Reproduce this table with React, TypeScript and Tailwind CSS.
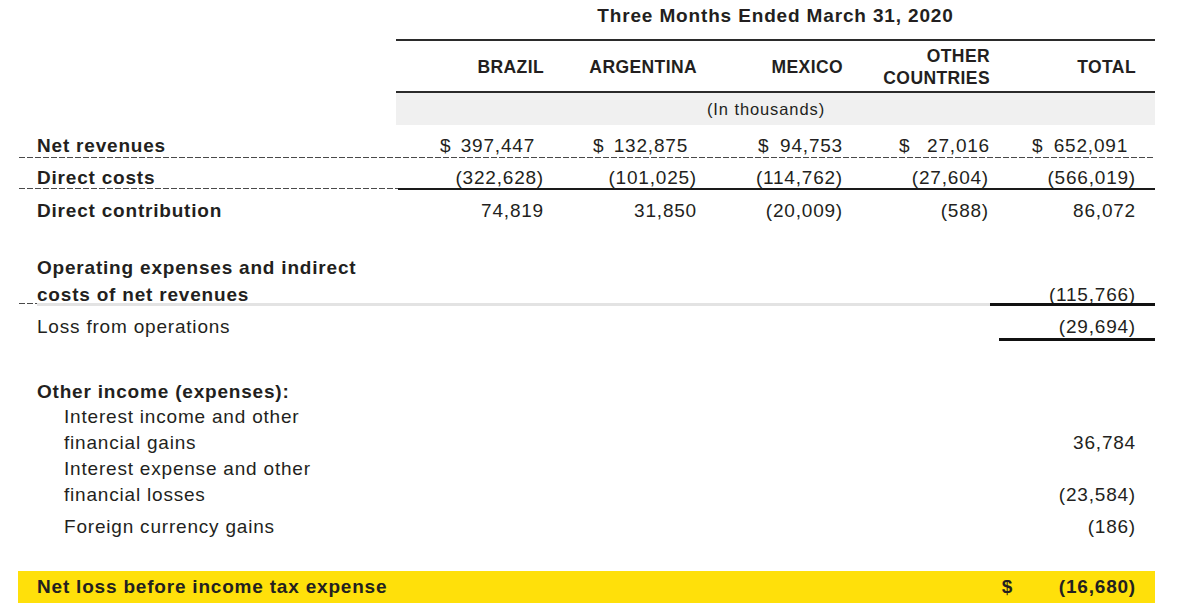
import React from 'react';

// ─── Data ─────────────────────────────────────────────────────────────────────

const GRID = 'grid grid-cols-[377px_156px_153px_146px_147px_157px]';

const revenues = [
  { amount: '397,447', cls: 'pl-[44px] pr-[17px]' },
  { amount: '132,875', cls: 'pl-[41px] pr-[17px]' },
  { amount: '94,753', cls: 'pl-[53px] pr-[8px]' },
  { amount: '27,016', cls: 'pl-[48px] pr-[8px]' },
  { amount: '652,091', cls: 'pl-[34px] pr-[27px]' },
];

const numPad = ['pr-[8px]', 'pr-[8px]', 'pr-[8px]', 'pr-[9px]', 'pr-[19px]'];

const directCosts = ['(322,628)', '(101,025)', '(114,762)', '(27,604)', '(566,019)'];
const contribution = ['74,819', '31,850', '(20,009)', '(588)', '86,072'];

// ─── Bits ─────────────────────────────────────────────────────────────────────

function Dashed({ className = '' }: { className?: string }) {
  return (
    <div
      className={`h-[1px] bg-[linear-gradient(to_right,#4a4a4a_75%,transparent_0)] bg-[length:8px_1px] bg-repeat-x ${className}`}
    />
  );
}

function Cells({ values }: { values: string[] }) {
  return (
    <>
      {values.map((v, i) => (
        <div key={i} className={`text-right ${numPad[i]}`}>{v}</div>
      ))}
    </>
  );
}

// ─── Page ─────────────────────────────────────────────────────────────────────

export default function App() {
  return (
    <div className="min-h-screen bg-white font-['Liberation_Sans',Arial,sans-serif] text-[#231f20] text-[19px] leading-[20px] tracking-[0.8px]">
      <div className="pl-[19px] w-[1155px]">
        {/* title */}
        <div className={GRID}>
          <div className="col-start-2 col-span-5 pt-[6px] pb-[13px] text-center font-bold text-[19px] tracking-[0.85px]">
            Three Months Ended March 31, 2020
          </div>
        </div>
        <div className="ml-[377px] h-[2px] bg-[#2b2b2b]" />

        {/* column headers */}
        <div className={`${GRID} h-[50px] pt-[2px] items-center font-bold text-[17.5px] tracking-[0.4px] uppercase`}>
          <div />
          <div className="text-right pr-[8px]">Brazil</div>
          <div className="text-right pr-[8px]">Argentina</div>
          <div className="text-right pr-[8px]">Mexico</div>
          <div className="text-right pr-[8px] leading-[22px]">
            Other<br />Countries
          </div>
          <div className="text-right pr-[19px]">Total</div>
        </div>
        <div className="ml-[377px] h-[2px] bg-[#2b2b2b]" />
        <div className="ml-[377px] h-[32px] bg-[#f0f0f0] pr-[19px] flex items-center justify-center text-[16.5px] tracking-[0.9px]">
          (In thousands)
        </div>

        {/* segment rows */}
        <div className={`${GRID} h-[32px] items-end pb-[1px]`}>
          <div className="pl-[18px] font-bold">Net revenues</div>
          {revenues.map((r, i) => (
            <div key={i} className={`flex justify-between ${r.cls}`}>
              <span>$</span>
              <span>{r.amount}</span>
            </div>
          ))}
        </div>
        <Dashed />

        <div className={`${GRID} h-[30px] items-end`}>
          <div className="pl-[18px] font-bold">Direct costs</div>
          <Cells values={directCosts} />
        </div>
        <div className="flex h-[2px]">
          <Dashed className="w-[379px]" />
          <div className="flex-1 bg-[#1a1a1a]" />
        </div>

        <div className={`${GRID} h-[31px] items-end`}>
          <div className="pl-[18px] font-bold">Direct contribution</div>
          <Cells values={contribution} />
        </div>

        {/* operating */}
        <div className={`${GRID} pt-[33px] items-end leading-[27px]`}>
          <div className="pl-[18px] font-bold">
            Operating expenses and indirect<br />costs of net revenues
          </div>
          <div className="col-start-6 text-right pr-[19px]">(115,766)</div>
        </div>
        <div className="flex items-start h-[3px] -mt-[5px]">
          <Dashed className="w-[18px]" />
          <div className="flex-1 h-[3px] bg-[#e3e3e3]" />
          <div className="w-[165px] h-[3px] bg-[#111]" />
        </div>

        <div className={`${GRID} pt-[11px]`}>
          <div className="pl-[18px]">Loss from operations</div>
          <div className="col-start-6 text-right pr-[19px]">(29,694)</div>
        </div>
        <div className="flex justify-end mt-[1px]">
          <div className="w-[156px] h-[3px] bg-[#111]" />
        </div>

        {/* other income */}
        <div className="pt-[41px] pl-[18px] font-bold">Other income (expenses):</div>
        <div className={`${GRID} mt-[2px] items-end leading-[26px]`}>
          <div className="pl-[45px]">Interest income and other<br />financial gains</div>
          <div className="col-start-6 text-right pr-[19px]">36,784</div>
        </div>
        <div className={`${GRID} items-end leading-[26px]`}>
          <div className="pl-[45px]">Interest expense and other<br />financial losses</div>
          <div className="col-start-6 text-right pr-[19px]">(23,584)</div>
        </div>
        <div className={`${GRID} mt-[9px]`}>
          <div className="pl-[45px]">Foreign currency gains</div>
          <div className="col-start-6 text-right pr-[19px]">(186)</div>
        </div>

        {/* total */}
        <div className="mt-[34px] -ml-[1px] h-[32px] bg-[#ffe00a] flex items-center font-bold">
          <div className="pl-[19px] flex-1">Net loss before income tax expense</div>
          <div className="w-[57px]">$</div>
          <div className="pr-[19px]">(16,680)</div>
        </div>
      </div>
    </div>
  );
}
